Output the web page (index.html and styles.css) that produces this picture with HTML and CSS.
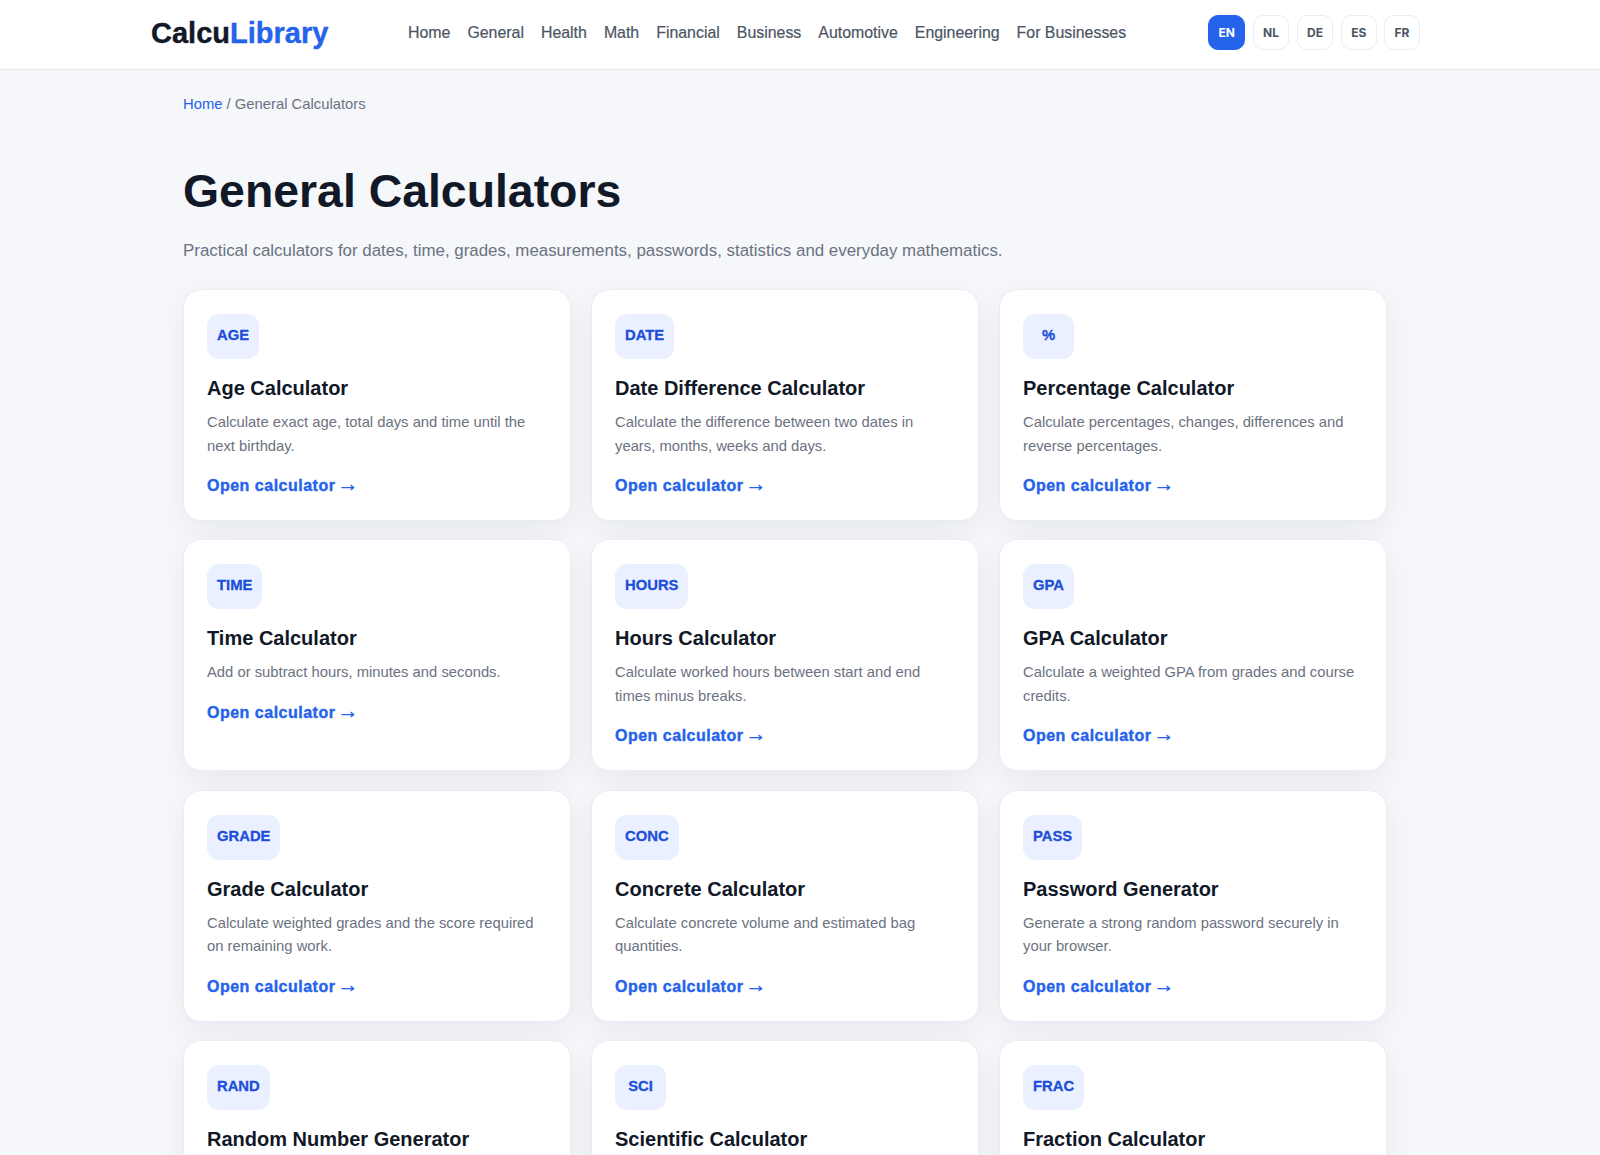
FILE: index.html
```html
<!DOCTYPE html>
<html lang="en">
<head>
    <meta charset="UTF-8">
    <title>General Calculators</title>
    <link rel="stylesheet" href="styles.css">
</head>
<body>
    <header class="site-header">
        <a class="logo" href="#">Calcu<span>Library</span></a>
        <nav class="main-nav">
            <a href="#">Home</a>
            <a href="#">General</a>
            <a href="#">Health</a>
            <a href="#">Math</a>
            <a href="#">Financial</a>
            <a href="#">Business</a>
            <a href="#">Automotive</a>
            <a href="#">Engineering</a>
            <a href="#">For Businesses</a>
        </nav>
        <div class="lang-list">
            <a class="lang active" href="#">EN</a>
            <a class="lang" href="#">NL</a>
            <a class="lang" href="#">DE</a>
            <a class="lang" href="#">ES</a>
            <a class="lang" href="#">FR</a>
        </div>
    </header>
    <main class="container">
        <div class="breadcrumb"><a href="#">Home</a> / General Calculators</div>
        <h1>General Calculators</h1>
        <p class="intro">Practical calculators for dates, time, grades, measurements, passwords, statistics and everyday mathematics.</p>
        <div class="card-grid">
            <a class="card" href="#">
                <span class="badge">AGE</span>
                <h2>Age Calculator</h2>
                <p>Calculate exact age, total days and time until the next birthday.</p>
                <span class="open">Open calculator <span class="arrow">→</span></span>
            </a>
            <a class="card" href="#">
                <span class="badge">DATE</span>
                <h2>Date Difference Calculator</h2>
                <p>Calculate the difference between two dates in years, months, weeks and days.</p>
                <span class="open">Open calculator <span class="arrow">→</span></span>
            </a>
            <a class="card" href="#">
                <span class="badge">%</span>
                <h2>Percentage Calculator</h2>
                <p>Calculate percentages, changes, differences and reverse percentages.</p>
                <span class="open">Open calculator <span class="arrow">→</span></span>
            </a>
            <a class="card" href="#">
                <span class="badge">TIME</span>
                <h2>Time Calculator</h2>
                <p>Add or subtract hours, minutes and seconds.</p>
                <span class="open">Open calculator <span class="arrow">→</span></span>
            </a>
            <a class="card" href="#">
                <span class="badge">HOURS</span>
                <h2>Hours Calculator</h2>
                <p>Calculate worked hours between start and end times minus breaks.</p>
                <span class="open">Open calculator <span class="arrow">→</span></span>
            </a>
            <a class="card" href="#">
                <span class="badge">GPA</span>
                <h2>GPA Calculator</h2>
                <p>Calculate a weighted GPA from grades and course credits.</p>
                <span class="open">Open calculator <span class="arrow">→</span></span>
            </a>
            <a class="card" href="#">
                <span class="badge">GRADE</span>
                <h2>Grade Calculator</h2>
                <p>Calculate weighted grades and the score required on remaining work.</p>
                <span class="open">Open calculator <span class="arrow">→</span></span>
            </a>
            <a class="card" href="#">
                <span class="badge">CONC</span>
                <h2>Concrete Calculator</h2>
                <p>Calculate concrete volume and estimated bag quantities.</p>
                <span class="open">Open calculator <span class="arrow">→</span></span>
            </a>
            <a class="card" href="#">
                <span class="badge">PASS</span>
                <h2>Password Generator</h2>
                <p>Generate a strong random password securely in your browser.</p>
                <span class="open">Open calculator <span class="arrow">→</span></span>
            </a>
            <a class="card" href="#">
                <span class="badge">RAND</span>
                <h2>Random Number Generator</h2>
                <p>Generate random numbers within a chosen range.</p>
                <span class="open">Open calculator <span class="arrow">→</span></span>
            </a>
            <a class="card" href="#">
                <span class="badge">SCI</span>
                <h2>Scientific Calculator</h2>
                <p>Use trigonometry, logarithms, powers and other functions.</p>
                <span class="open">Open calculator <span class="arrow">→</span></span>
            </a>
            <a class="card" href="#">
                <span class="badge">FRAC</span>
                <h2>Fraction Calculator</h2>
                <p>Add, subtract, multiply and divide fractions.</p>
                <span class="open">Open calculator <span class="arrow">→</span></span>
            </a>
        </div>
    </main>
</body>
</html>
```

FILE: styles.css
```css
html {
    height: 100%;
    overflow: hidden;
}
body {
    margin: 0;
    height: 100%;
    overflow: hidden;
    padding-right: 30px;
    box-sizing: border-box;
    background: #f5f7fb;
    color: #111827;
    font-family: "Liberation Sans", Arial, sans-serif;
}
a {
    text-decoration: none;
}
.site-header {
    display: flex;
    align-items: center;
    height: 65px;
    margin-right: -30px;
    padding: 0 179px 4px 151px;
    background: #fff;
    border-bottom: 1px solid #e5e7eb;
}
.logo {
    width: 257px;
    margin-top: 2px;
    font-size: 29px;
    font-weight: 800;
    color: #111827;
    -webkit-text-stroke: 0.4px;
}
.logo span {
    color: #2563eb;
}
.main-nav {
    display: flex;
    gap: 17px;
    width: 800px;
}
.main-nav a {
    font-size: 15.9px;
    font-weight: 500;
    color: #4b5563;
    -webkit-text-stroke: 0.2px;
}
.lang-list {
    display: flex;
    gap: 7.4px;
}
.lang {
    display: flex;
    align-items: center;
    justify-content: center;
    height: 33px;
    padding: 0 9.4px;
    border: 1px solid #e9ecf1;
    border-radius: 10px;
    font-family: Inter, sans-serif;
    font-size: 12px;
    font-weight: 700;
    color: #4b5563;
}
.lang.active {
    background: #2563eb;
    border-color: #2563eb;
    color: #fff;
}
.container {
    width: 1204px;
    margin: 0 auto;
}
.breadcrumb {
    padding-top: 25px;
    font-size: 14.8px;
    line-height: 18px;
    color: #6b7280;
}
.breadcrumb a {
    color: #2563eb;
}
h1 {
    margin: 50px 0 0;
    font-size: 46.4px;
    line-height: 56px;
    font-weight: 800;
    color: #111827;
}
.intro {
    margin: 19px 0 0;
    font-size: 16.9px;
    line-height: 26px;
    color: #6b7280;
}
.card-grid {
    display: grid;
    grid-template-columns: repeat(3, 1fr);
    gap: 18.3px 20px;
    margin-top: 25px;
}
.card {
    display: block;
    box-sizing: border-box;
    height: 232px;
    padding: 24px 30px 22px 23px;
    background: #fff;
    border: 1px solid #e9ecf1;
    border-radius: 18px;
    box-shadow: 0 10px 30px rgba(15, 23, 42, 0.06);
}
.badge {
    display: inline-flex;
    align-items: center;
    justify-content: center;
    min-width: 51px;
    box-sizing: border-box;
    height: 45px;
    padding: 0 10px 3px;
    border-radius: 12px;
    background: #eaf0ff;
    color: #1d4ed8;
    font-size: 14.8px;
    font-weight: 800;
    -webkit-text-stroke: 0.3px;
}
.card h2 {
    margin: 16px 0 0;
    font-size: 20px;
    line-height: 26px;
    font-weight: 700;
    color: #111827;
}
.card p {
    margin: 10px 0 0;
    font-size: 14.8px;
    line-height: 23.5px;
    color: #6b7280;
}
.open {
    display: block;
    margin-top: 18px;
    font-size: 16px;
    line-height: 20px;
    font-weight: 800;
    letter-spacing: 0.5px;
    color: #2563eb;
    -webkit-text-stroke: 0.4px;
}
.arrow {
    margin-left: -3px;
    font-size: 21px;
    line-height: 0;
    letter-spacing: 0;
}
```
